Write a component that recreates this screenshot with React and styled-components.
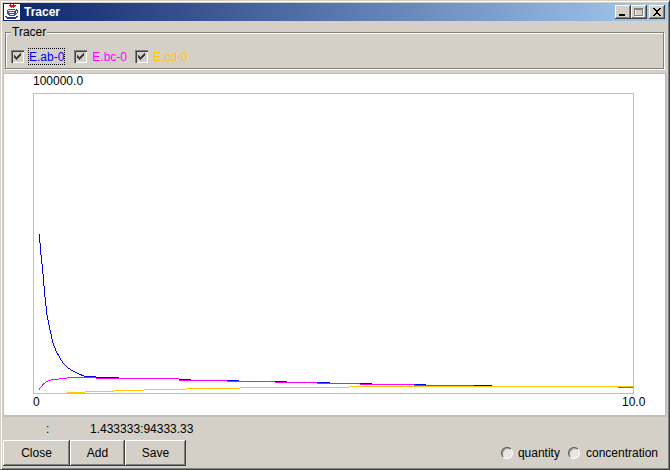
import React from "react";
import styled, { createGlobalStyle } from "styled-components";

const Global = createGlobalStyle`
  html, body { margin: 0; padding: 0; background: #d4d0c8; }
  body { font-family: "Liberation Sans", Arial, sans-serif; font-size: 12px; color: #000; }
  * { box-sizing: border-box; }
`;

const Win = styled.div`
  width: 670px; height: 470px; display: flex; flex-direction: column;
  background: #d4d0c8; padding: 2px 2px 3px 2px;
  border-style: solid; border-width: 1px;
  border-color: #d4d0c8 #404040 #404040 #d4d0c8;
  box-shadow: inset 1px 1px 0 #fff, inset -1px -1px 0 #808080;
`;
const TitleBar = styled.div`
  height: 18px; flex: none; display: flex; align-items: center; padding: 0 2px 0 1px;
  background: linear-gradient(90deg, #0a246a, #a6caf0);
`;
const TitleText = styled.span`
  color: #fff; font-weight: 700; font-size: 12px; margin-left: 4px; flex: 1;
`;
const CapBtn = styled.button`
  width: 16px; height: 14px; padding: 0; margin-left: ${p => p.$gap || 0}px; background: #d4d0c8; border: 0;
  display: flex; align-items: center; justify-content: center;
  box-shadow: inset -1px -1px 0 #404040, inset 1px 1px 0 #fff, inset -2px -2px 0 #808080;
`;
const Group = styled.fieldset`
  flex: none; height: 44px; width: 659px; margin: 4px 0 0 2px; padding: 8px 0 0 5px;
  border: 1px solid #808080;
  box-shadow: inset 1px 1px 0 #fff, 1px 1px 0 #fff;
  display: flex; align-items: flex-start;
`;
const Legend = styled.legend`
  padding: 0 1px; margin-left: 0; font-size: 12px; line-height: 14px; background: #d4d0c8; position: relative;
`;
const Checks = styled.div`
  display: flex; align-items: center; height: 19px;
`;
const Check = styled.span`
  display: flex; align-items: center; margin-right: ${p => p.$mr}px;
`;
const Box = styled.span`
  width: 13px; height: 13px; flex: none; background: #d4d0c8; display: block; margin-right: 4px;
  box-shadow: inset 1px 1px 0 #808080, inset 2px 2px 0 #404040, inset -1px -1px 0 #fff;
`;
const CheckLabel = styled.span`
  color: ${p => p.$c}; font-size: 12px; line-height: 14px; padding: 0 1px; height: 17px;
  display: flex; align-items: center;
  outline: ${p => (p.$focus ? "1px dotted #000" : "none")};
  outline-offset: -1px;
`;
const PlotPanel = styled.div`
  flex: none; height: 344px; margin-top: 4px; background: #fff; position: relative;
  border-right: 2px solid #c0c0c0; border-bottom: 2px solid #c0c0c0; border-left: 1px solid #c0c0c0; border-top: 1px solid #c0c0c0;
`;
const Chart = styled.svg`
  position: absolute; left: -1px; top: -1px; display: block;
`;
const AxisLabel = styled.span`
  position: absolute; font-size: 12px; line-height: 14px; left: ${p => p.$x}px; top: ${p => p.$y}px;
`;
const Status = styled.div`
  flex: none; height: 23px; display: flex; align-items: center; padding-left: 43px; font-size: 12px;
`;
const Colon = styled.span` width: 44px; `;
const Footer = styled.div`
  flex: none; height: 26px; display: flex; align-items: stretch; justify-content: space-between;
`;
const Buttons = styled.div` display: flex; `;
const PushBtn = styled.button`
  width: ${p => p.$w}px; height: 26px; padding: 0; border: 0; background: #d4d0c8;
  font: 12px "Liberation Sans", Arial, sans-serif; color: #000;
  box-shadow: inset -1px -1px 0 #404040, inset 1px 1px 0 #fff, inset -2px -2px 0 #808080;
`;
const Radios = styled.div` display: flex; align-items: center; padding-right: 9px; `;
const Radio = styled.span`
  width: 12px; height: 12px; border-radius: 50%; display: block; background: #e8e6e2; flex: none;
  border: 1px solid; border-color: #555 #fff #fff #555;
  box-shadow: inset 1px 1px 0 #999;
  margin-right: ${p => p.$mr}px; margin-left: ${p => p.$ml}px;
`;

const blue = "#0000ff", mag = "#ff00ff", yel = "#ffc800";
const seg = (x1, x2, y) => `M${x1} ${y + 0.5}H${x2}`;
const curve = pts => "M" + pts.map(p => p.join(" ")).join("L");

const bluePts = [[39.5,234],[40.5,251],[42.5,268],[44.5,292],[47,315],[50.5,332],[53,343],[56.5,352],[60,358],[63,363],[68,368],[73,371],[79,374],[85,376.5]];
const magPts = [[39,389.5],[41,387],[44,383.5],[47,381.5],[51,380],[56,379.5],[62,378.5],[72,377.5]];

const blueSteps = [[85,96,376],[96,119,377],[137,149,378],[179,191,379],[227,239,380],[275,287,381],[317,330,382],[360,372,383],[414,426,384],[474,492,385]];
const magSteps = [[72,96,377],[96,179,378],[179,227,380],[227,275,381],[275,317,382],[317,360,383],[360,414,384],[414,474,385],[474,492,386],[618,633,387]];
const yelSteps = [[38,67,393],[67,85,392],[85,114,391],[114,144,390],[144,186,389],[186,240,388],[240,349,387],[349,634,386]];

const Plot = () => (
  <Chart width="663" height="344" viewBox="3 73 663 344" fill="none">
    <rect x="33.5" y="93.5" width="600" height="300" stroke="#c0c0c0" />
    <path d={curve(bluePts)} stroke={blue} shapeRendering="crispEdges" />
    <path d={blueSteps.map(s => seg(...s)).join("")} stroke={blue} shapeRendering="crispEdges" />
    <path d={curve(magPts)} stroke={mag} shapeRendering="crispEdges" />
    <path d={magSteps.slice(0, -1).map(s => seg(...s)).join("")} stroke={mag} shapeRendering="crispEdges" />
    <path d={yelSteps.map(s => seg(...s)).join("")} stroke={yel} shapeRendering="crispEdges" />
    <path d={seg(...magSteps[magSteps.length - 1])} stroke={mag} shapeRendering="crispEdges" />
  </Chart>
);

const CheckMark = () => (
  <svg width="13" height="13" viewBox="0 0 13 13" shapeRendering="crispEdges" style={{ display: "block" }}>
    <path d="M3 5h1v1h1v1h1V6h1V5h1V4h1V3h1v3H9v1H8v1H7v1H6v1H5V9H4V8H3z" fill="#404040" />
  </svg>
);

const JavaIcon = () => (
  <svg width="16" height="16" viewBox="0 0 16 16" shapeRendering="crispEdges" style={{ flex: "none", background: "#fff" }}>
    <path d="M6 0h1v1h2V0h1v1h2v1h-1v1h-1v1H9V3H8v1H7V3H6V2H5V1h1z" fill="#e01010" />
    <path d="M4 5h7v1h1V5h1v1h1v3h-1v1h-1v1h-1v1H5v-1H4v-1H3V6h1z" fill="#3c4c9c" />
    <path d="M4 6h7v1H4zM12 7h1v2h-1zM5 8h5v1H5zM6 10h4v1H6z" fill="#fff" />
    <path d="M1 12h2v1h9v-1h2v1h-1v1h-1v1H3v-1H2v-1H1z" fill="#28347c" />
  </svg>
);

const Glyph = ({ d }) => (
  <svg width="16" height="14" viewBox="0 0 16 14" shapeRendering="crispEdges" style={{ display: "block" }}><path d={d} fill="#000" /></svg>
);

export default function App() {
  return (
    <>
      <Global />
      <Win>
        <TitleBar>
          <JavaIcon />
          <TitleText>Tracer</TitleText>
          <CapBtn><Glyph d="M4 9h6v2H4z" /></CapBtn>
          <CapBtn>
            <svg width="16" height="14" viewBox="0 0 16 14" shapeRendering="crispEdges" style={{ display: "block" }}>
              <path d="M4.5 4.5h8v7h-8z" fill="none" stroke="#fff" />
              <path d="M3.5 3.5h8v7h-8z" fill="none" stroke="#808080" />
              <path d="M3 3h9v2H3z" fill="#808080" />
            </svg>
          </CapBtn>
          <CapBtn $gap={2}><Glyph d="M4 3h2v1h1v1h2V4h1V3h2v1h-1v1h-1v1H9v2h1v1h1v1h1v1h-2v-1H9V9H7v1H6v1H4v-1h1V9h1V8h1V6H6V5H5V4H4z" /></CapBtn>
        </TitleBar>
        <Group>
          <Legend>Tracer</Legend>
          <Checks>
            <Check $mr={9}><Box><CheckMark /></Box><CheckLabel $c={blue} $focus>E.ab-0</CheckLabel></Check>
            <Check $mr={7}><Box><CheckMark /></Box><CheckLabel $c={mag}>E.bc-0</CheckLabel></Check>
            <Check $mr={0}><Box><CheckMark /></Box><CheckLabel $c={yel}>E.cd-0</CheckLabel></Check>
          </Checks>
        </Group>
        <PlotPanel>
          <Plot />
          <AxisLabel $x={29} $y={0}>100000.0</AxisLabel>
          <AxisLabel $x={29} $y={321}>0</AxisLabel>
          <AxisLabel $x={618} $y={321}>10.0</AxisLabel>
        </PlotPanel>
        <Status><Colon>:</Colon><span>1.433333:94333.33</span></Status>
        <Footer>
          <Buttons>
            <PushBtn $w={67}>Close</PushBtn>
            <PushBtn $w={55}>Add</PushBtn>
            <PushBtn $w={61}>Save</PushBtn>
          </Buttons>
          <Radios>
            <Radio $ml={0} $mr={5} />quantity
            <Radio $ml={8} $mr={6} />concentration
          </Radios>
        </Footer>
      </Win>
    </>
  );
}
